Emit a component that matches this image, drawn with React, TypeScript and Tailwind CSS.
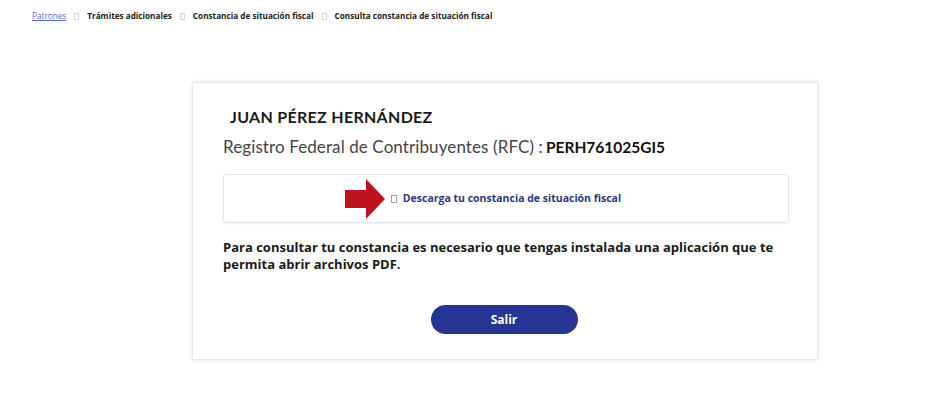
import React from 'react';

const Sep: React.FC = () => (
  <span className="inline-block w-[5px] h-[7px] border border-gray-300 mx-[8px] align-middle" />
);

const App: React.FC = () => {
  return (
    <div className="w-[949px] h-[405px] bg-white font-['Open_Sans',sans-serif] relative overflow-hidden">
      <div className="flex items-center pl-[32px] pt-[10px] text-[8.2px] leading-[12px]">
        <a className="text-[#5a6cc4] underline">Patrones</a>
        <Sep />
        <span className="font-bold text-[#222]">Trámites adicionales</span>
        <Sep />
        <span className="font-bold text-[#222]">Constancia de situación fiscal</span>
        <Sep />
        <span className="font-bold text-[#222]">Consulta constancia de situación fiscal</span>
      </div>

      <div className="ml-[192px] mt-[60px] w-[626px] h-[278px] border border-gray-200 shadow-[0_0_4px_rgba(0,0,0,0.12)] px-[30px] pt-[22px]">
        <div className="pl-[7px] text-[16px] leading-[24px] font-bold text-[#1a1a1a] tracking-[0.3px] font-['Lato',sans-serif]">
          JUAN PÉREZ HERNÁNDEZ
        </div>
        <div className="mt-[6px] text-[17px] leading-[24px] text-[#444] tracking-[0.1px] font-['Lato',sans-serif]">
          Registro Federal de Contribuyentes (RFC) :
          <span className="font-bold text-[#111] ml-[3px] text-[15.5px] tracking-normal">PERH761025GI5</span>
        </div>

        <div className="mt-[15px] w-[566px] h-[49px] border border-gray-200 rounded-[3px] shadow-[0_1px_2px_rgba(0,0,0,0.06)] flex items-center justify-center relative">
          <svg className="absolute left-[121px] top-[4px]" width="40" height="40" viewBox="0 0 40 40">
            <polygon points="0,11 21,11 21,0 40,20 21,40 21,29 0,29" fill="#c1121f" />
          </svg>
          <span className="inline-block w-[6px] h-[8px] border border-gray-400 mr-[6px]" />
          <span className="text-[10.5px] font-bold text-[#2b3a7a]">Descarga tu constancia de situación fiscal</span>
        </div>

        <p className="mt-[16px] text-[13px] leading-[17px] font-bold text-[#1a1a1a] w-[560px]">
          Para consultar tu constancia es necesario que tengas instalada una aplicación que te permita abrir archivos PDF.
        </p>

        <div className="flex justify-center mt-[32px] pr-[2px]">
          <button className="w-[147px] h-[29px] rounded-full bg-[#263594] text-white text-[12px] font-bold">
            Salir
          </button>
        </div>
      </div>
    </div>
  );
};

export default App;
